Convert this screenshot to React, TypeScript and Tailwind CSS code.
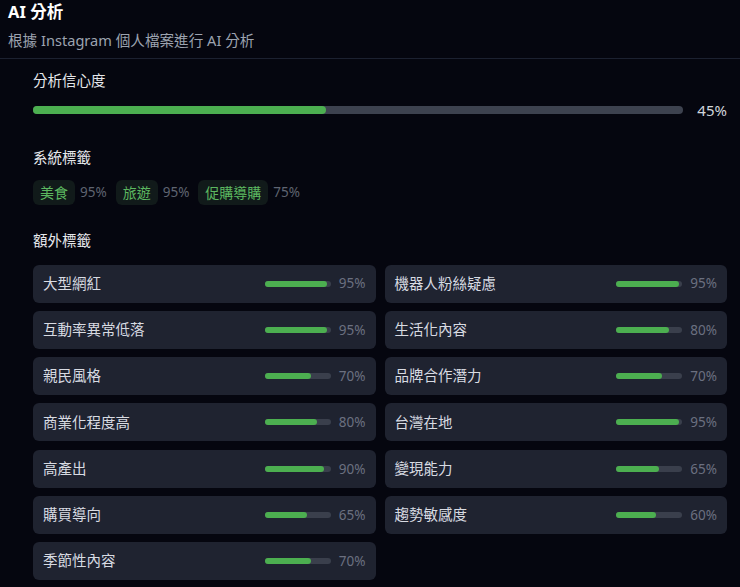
const systemTags = [
  { name: '美食', score: 95 },
  { name: '旅遊', score: 95 },
  { name: '促購導購', score: 75 },
]

const extraTags = [
  { name: '大型網紅', score: 95 },
  { name: '機器人粉絲疑慮', score: 95 },
  { name: '互動率異常低落', score: 95 },
  { name: '生活化內容', score: 80 },
  { name: '親民風格', score: 70 },
  { name: '品牌合作潛力', score: 70 },
  { name: '商業化程度高', score: 80 },
  { name: '台灣在地', score: 95 },
  { name: '高產出', score: 90 },
  { name: '變現能力', score: 65 },
  { name: '購買導向', score: 65 },
  { name: '趨勢敏感度', score: 60 },
  { name: '季節性內容', score: 70 },
]

export default function App() {
  return (
    <div
      className="min-h-[587px] w-full bg-[#05060f] text-[#e5e7eb]"
      style={{ fontFamily: '"Noto Sans", "Noto Sans CJK TC", sans-serif' }}
    >
      <div className="border-b border-[#1c2130] px-2 pb-[8px]">
        <h2 className="text-[16.5px] leading-6 font-bold text-white">AI 分析</h2>
        <p className="mt-[6px] text-[14.6px] leading-5 text-[#9ca3af]">根據 Instagram 個人檔案進行 AI 分析</p>
      </div>

      <div className="pl-[33px] pr-[13px] pt-[11px]">
        <div className="text-[14.5px] leading-5 text-[#e5e7eb]">分析信心度</div>
        <div className="mt-[9px] flex items-center gap-[13px]">
          <div className="h-2 flex-1 rounded-full bg-[#3d424f]">
            <div className="h-2 rounded-full bg-[#4caf50]" style={{ width: '45%' }} />
          </div>
          <span className="w-[31px] text-right text-[15px] text-[#d1d5db]">45%</span>
        </div>

        <div className="mt-[25px] text-[14.5px] leading-5">系統標籤</div>
        <div className="mt-[13px] flex items-center gap-[9px]">
          {systemTags.map((t) => (
            <div key={t.name} className="flex items-center gap-[5px]">
              <span className="rounded-md bg-[#111a1a] px-[7px] py-[2px] text-[14px] leading-[21px] text-[#5cb860]">
                {t.name}
              </span>
              <span className="text-[13.5px] text-[#5f6471]">{t.score}%</span>
            </div>
          ))}
        </div>

        <div className="mt-[25px] text-[14.5px] leading-5">額外標籤</div>
        <div className="mt-[15px] grid grid-cols-2 gap-x-[9px] gap-y-[8.3px]">
          {extraTags.map((t) => (
            <div
              key={t.name}
              className="flex h-[38px] items-center rounded-md bg-[#1f2330] pl-[10px] pr-[10px]"
            >
              <span className="flex-1 text-[14.5px] text-[#d8dbe2]">{t.name}</span>
              <div className="h-[6px] w-[66px] rounded-full bg-[#3a3f4c]">
                <div className="h-[6px] rounded-full bg-[#4caf50]" style={{ width: `${t.score}%` }} />
              </div>
              <span className="ml-[7px] w-[28px] text-right text-[13.5px] text-[#6b7080]">{t.score}%</span>
            </div>
          ))}
        </div>
      </div>
    </div>
  )
}
